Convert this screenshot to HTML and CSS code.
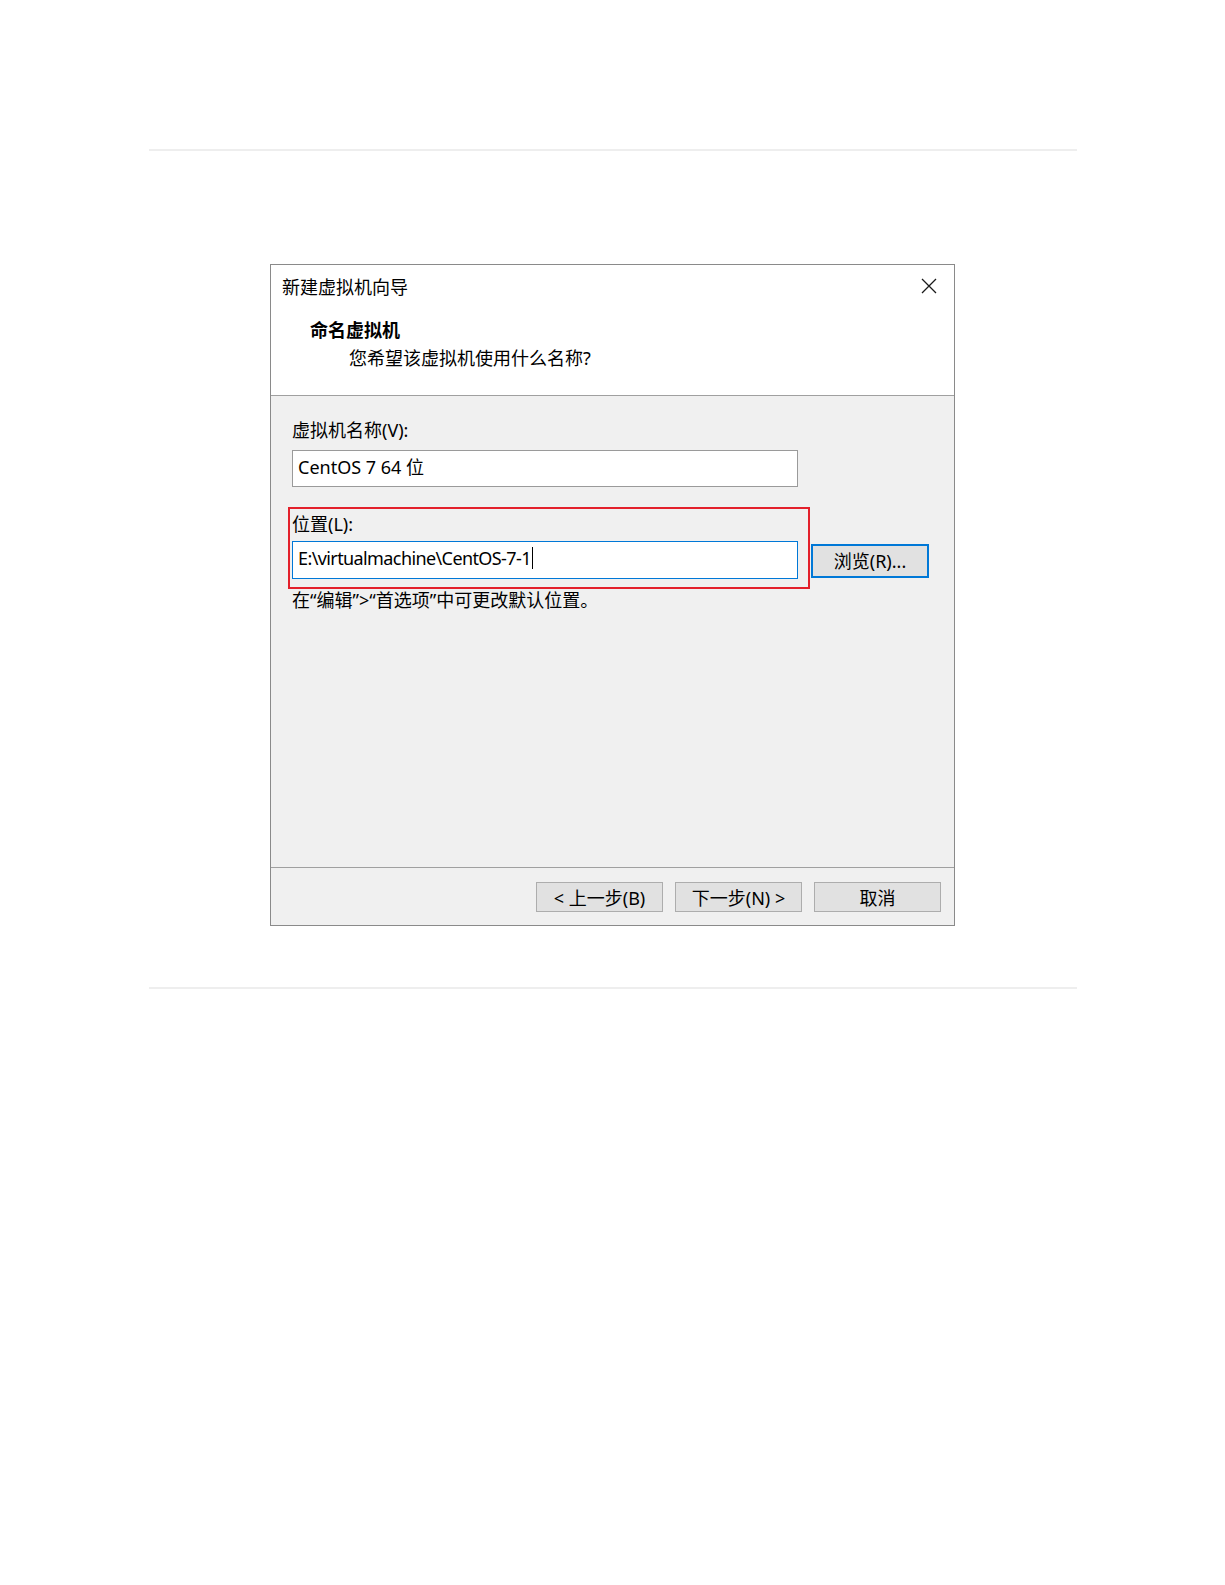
FILE: index.html
```html
<html>

<head>
    <meta charset="utf-8">
    <link rel="stylesheet" href="styles.css">
</head>

<body>

    <div class="page">
        <hr class="rule">

        <div class="dialog">
            <div class="header">
                <div class="titlebar">
                    <span class="title">新建虚拟机向导</span>
                    <svg class="close" width="16" height="16" viewBox="0 0 16 16">
                        <path d="M1 1 L15 15 M15 1 L1 15" stroke="#1a1a1a" stroke-width="1.3" fill="none" />
                    </svg>
                </div>
                <div class="heading">命名虚拟机</div>
                <div class="subheading">您希望该虚拟机使用什么名称?</div>
            </div>

            <div class="content">
                <div class="label">虚拟机名称(V):</div>
                <div class="field">CentOS 7 64 位</div>

                <div class="location-row">
                    <div class="highlight">
                        <div class="label">位置(L):</div>
                        <div class="field focused"><span class="path">E:\virtualmachine\CentOS-7-1</span><span class="caret"></span></div>
                    </div>
                    <div class="button browse">浏览(R)...</div>
                </div>

                <div class="hint">在“编辑”&gt;“首选项”中可更改默认位置。</div>
            </div>

            <div class="footer">
                <div class="button">&lt; 上一步(B)</div>
                <div class="button">下一步(N) &gt;</div>
                <div class="button">取消</div>
            </div>
        </div>

        <hr class="rule bottom">
    </div>

</body>

</html>
```

FILE: styles.css
```css
body,
html {
    background: #ffffff;
    margin: 0;
    font-family: "Noto Sans", "Noto Sans CJK SC", sans-serif;
    font-size: 18px;
    color: #000000;
}

.page {
    width: 928px;
    margin: 0 auto;
    padding-top: 149px;
}

.rule {
    border: none;
    height: 2px;
    background: #eeeeee;
    margin: 0;
}

.rule.bottom {
    margin-top: 61px;
}

.dialog {
    width: 685px;
    margin: 113px auto 0;
    border: 1px solid #8a8a8a;
    box-sizing: border-box;
    background: #f0f0f0;
}

/* white top part */
.header {
    background: #ffffff;
    height: 131px;
    box-sizing: border-box;
    border-bottom: 1px solid #a0a0a0;
}

.titlebar {
    height: 42px;
    display: flex;
    align-items: center;
    justify-content: space-between;
    padding: 0 17px 0 11px;
}

.heading {
    font-weight: bold;
    line-height: 28px;
    margin-top: 9px;
    padding-left: 39px;
}

.subheading {
    line-height: 28px;
    padding-left: 78px;
}

.content {
    height: 472px;
    box-sizing: border-box;
    border-bottom: 1px solid #a0a0a0;
    padding: 22px 0 0 21px;
}

.label {
    line-height: 24px;
}

.field {
    width: 506px;
    height: 37px;
    box-sizing: border-box;
    border: 1px solid #9a9a9a;
    background: #ffffff;
    margin-top: 8px;
    padding: 0 0 5px 5px;
    display: flex;
    align-items: center;
}

.field.focused {
    height: 38px;
    border-color: #0078d7;
    margin-top: 5px;
}

.path {
    letter-spacing: -0.6px;
}

.caret {
    display: inline-block;
    width: 1px;
    height: 22px;
    background: #000000;
    margin-left: 1px;
}

.location-row {
    display: flex;
    align-items: flex-end;
    margin-top: 20px;
    margin-left: -4px;
}

.highlight {
    border: 2px solid #e3202b;
    padding: 3px 10px 8px 2px;
}

.button {
    background: #e1e1e1;
    border: 1px solid #adadad;
    box-sizing: border-box;
    height: 30px;
    width: 127px;
    display: flex;
    align-items: center;
    justify-content: center;
    padding-bottom: 1px;
}

.button.browse {
    width: 118px;
    height: 34px;
    border: 2px solid #0078d7;
    margin: 0 0 11px 1px;
    padding-bottom: 3px;
}

.hint {
    line-height: 22px;
}

.footer {
    height: 57px;
    display: flex;
    justify-content: flex-end;
    gap: 12px;
    padding: 14px 13px 0 0;
    box-sizing: border-box;
}
```
